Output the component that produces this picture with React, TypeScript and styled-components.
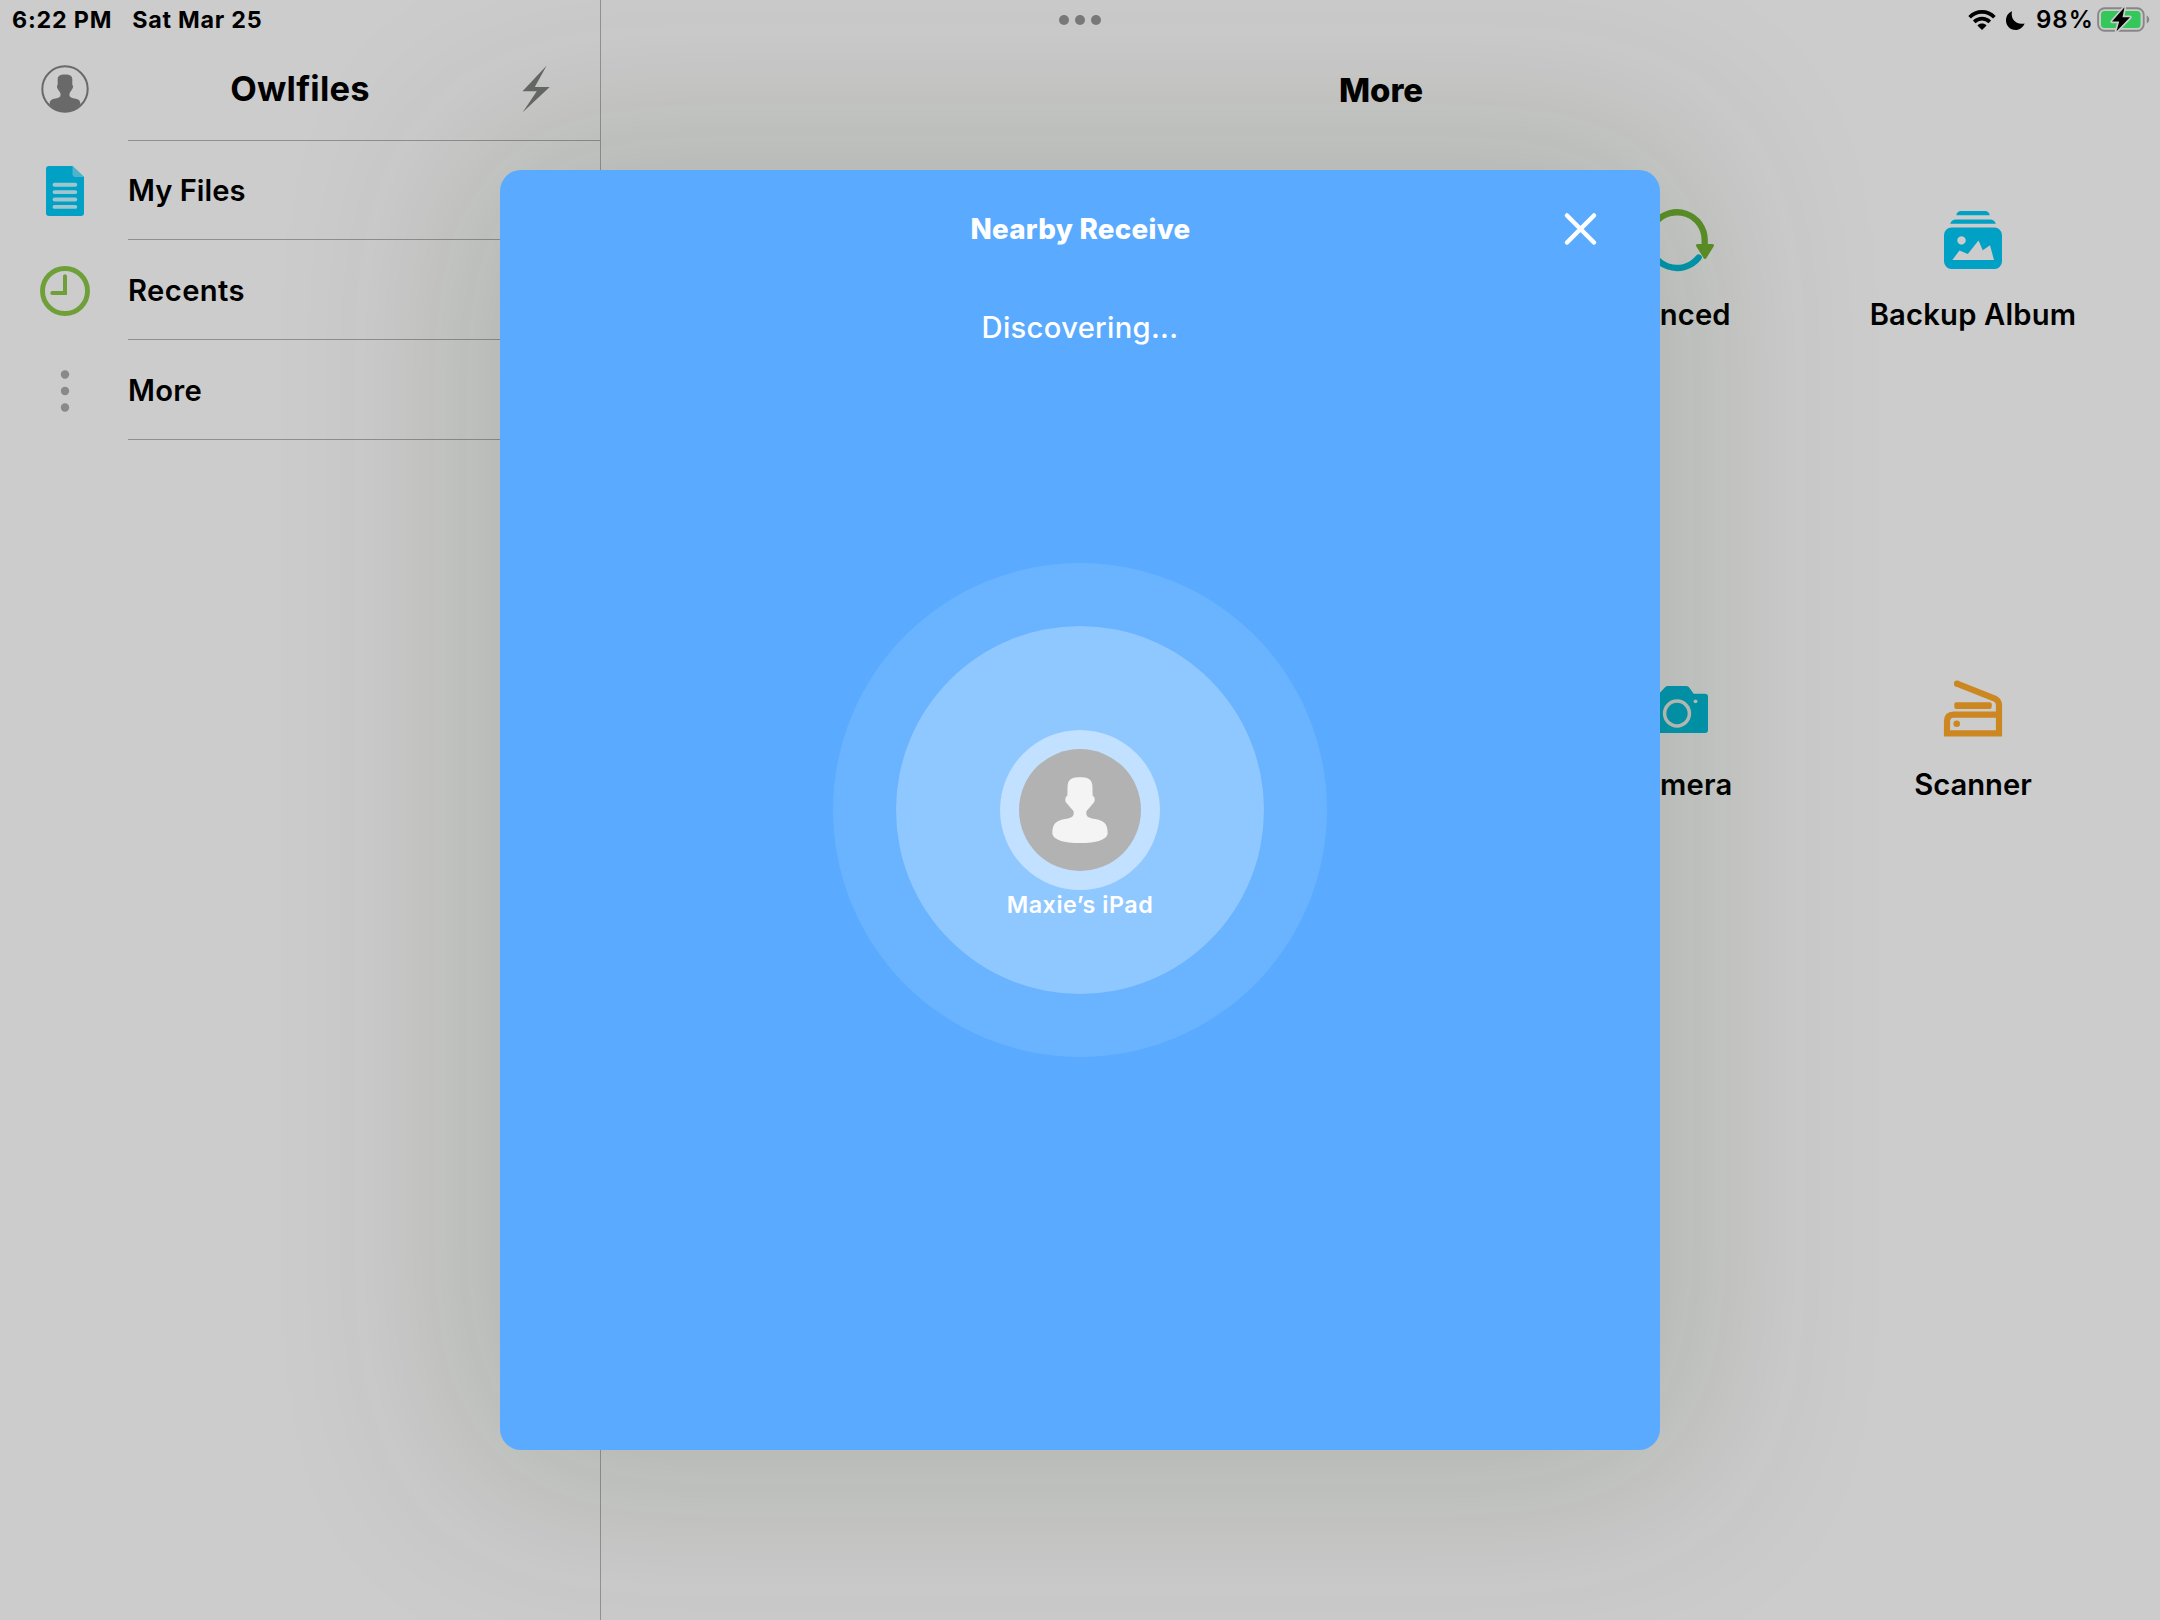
import React from "react";
import styled, { createGlobalStyle } from "styled-components";

const GlobalStyle = createGlobalStyle`
  *, *::before, *::after { box-sizing: border-box; }
  body {
    margin: 0;
    background: #cccccc;
    overflow: hidden;
  }
`;

const Screen = styled.div`
  display: grid;
  grid-template: 1620px / 2160px;
  width: 2160px;
  height: 1620px;
  overflow: hidden;
  background: #cccccc;
  color: #000;
  font-family: Inter, "Liberation Sans", sans-serif;
  white-space: nowrap;

  & > * {
    grid-area: 1 / 1;
  }
`;

const Icon = styled.svg`
  display: block;
  flex: none;
  overflow: visible;
`;

/* Status bar */

const StatusBar = styled.header`
  align-self: start;
  display: grid;
  grid-template-columns: 1fr auto 1fr;
  align-items: center;
  height: 40px;
  padding: 0 10px 0 12px;
  font-size: 23.3px;
  font-weight: 650;
  line-height: 40px;
`;

const StatusLeft = styled.div`
  display: flex;
  gap: 20px;
`;

const StatusText = styled.span<{ $tracking: number }>`
  letter-spacing: ${({ $tracking }) => $tracking}px;
`;

const StatusRight = styled.div`
  display: flex;
  justify-content: flex-end;
  align-items: center;
`;

const BatteryLevel = styled.span`
  margin: 0 3px 0 11px;
  font-size: 24px;
  font-weight: 600;
  letter-spacing: 1.1px;
`;

const MoonSlot = styled.span`
  display: flex;
  margin-left: 10px;
`;

const Multitask = styled.div`
  display: flex;
  gap: 6px;
  margin-right: 2px;
`;

const Dot = styled.i`
  width: 10px;
  height: 10px;
  border-radius: 50%;
  background: #7a7a79;
`;

/* Split view */

const SplitView = styled.div`
  display: grid;
  grid-template-columns: 601px 1fr;
`;

const Sidebar = styled.aside`
  border-right: 1px solid #929292;
`;

const SidebarHeader = styled.div`
  display: grid;
  grid-template-columns: 128px 344px 1fr;
  align-items: center;
  height: 140px;
  padding-top: 37px;
`;

const SidebarTitle = styled.h1`
  margin: 0;
  font-size: 34.5px;
  font-weight: 700;
  line-height: 40px;
  letter-spacing: 0.2px;
  text-align: center;
`;

const IconSlot = styled.span`
  display: flex;
  justify-content: center;
  align-items: center;
`;

const AccountSlot = styled(IconSlot)`
  padding-left: 1px;
`;

const HeaderAction = styled(IconSlot)`
  justify-content: flex-start;
  padding-left: 50px;
`;

const Rows = styled.nav`
  display: flex;
  flex-direction: column;
  margin-top: 1px;
`;

const IconCell = styled(IconSlot)`
  padding: 2px 0 0 2px;
`;

const RowLabel = styled.span<{ $tracking: number }>`
  display: flex;
  align-items: center;
  padding-top: 2px;
  border-bottom: 1px solid #8f8f8f;
  font-size: 29.2px;
  font-weight: 600;
  letter-spacing: ${({ $tracking }) => $tracking}px;
`;

const Row = styled.div`
  display: grid;
  grid-template-columns: 128px 1fr;
  height: 100px;

  &:first-child {
    height: 99px;
  }

  &:first-child > ${IconCell}, &:first-child > ${RowLabel} {
    padding-top: 1px;
  }
`;

const HeaderRule = styled.div`
  height: 1px;
  margin: 0 0 -1px 128px;
  background: #8f8f8f;
`;

const Main = styled.main`
  padding: 70px 39px 0 40px;
`;

const MainTitle = styled.h2`
  margin: 0;
  font-size: 33px;
  font-weight: 800;
  line-height: 40px;
  letter-spacing: -0.1px;
  text-align: center;
`;

const TileGrid = styled.div`
  display: grid;
  grid-template-columns: repeat(5, 296px);
  grid-auto-rows: 470px;
  margin-top: 94px;
`;

const Tile = styled.div<{ $column: number }>`
  grid-column: ${({ $column }) => $column};
  display: flex;
  flex-direction: column;
  align-items: center;
  gap: 18px;
`;

const TileLabel = styled.span<{ $tracking: number }>`
  font-size: 29.2px;
  font-weight: 600;
  line-height: 41px;
  letter-spacing: ${({ $tracking }) => $tracking}px;
`;

/* Nearby receive sheet */

const Sheet = styled.section`
  place-self: center;
  display: grid;
  grid-template-rows: 118px 80px 884px;
  align-content: start;
  width: 1160px;
  height: 1280px;
  border-radius: 21px;
  background: #5aaaff;
  box-shadow: 0 0 200px 32px rgba(22, 48, 14, 0.162);
  color: #fff;
`;

const SheetHeader = styled.div`
  display: grid;
  grid-template-columns: 160px 1fr 160px;
  align-items: center;
`;

const SheetTitle = styled.h3`
  grid-column: 2;
  margin: 0;
  padding-left: 1px;
  font-size: 27.8px;
  font-weight: 800;
  line-height: 40px;
  letter-spacing: 0.25px;
  text-align: center;
`;

const SheetStatus = styled.p`
  margin: 0;
  align-self: center;
  font-size: 29.2px;
  font-weight: 500;
  line-height: 40px;
  letter-spacing: 0.3px;
  text-align: center;
`;

const Radar = styled.div`
  display: grid;
  place-items: center;

  & > * {
    grid-area: 1 / 1;
  }
`;

const Ring = styled.div<{ $size: number; $color: string }>`
  flex: none;
  display: grid;
  place-items: center;
  width: ${({ $size }) => $size}px;
  height: ${({ $size }) => $size}px;
  border-radius: 50%;
  background: ${({ $color }) => $color};
`;

const Device = styled.div`
  display: flex;
  flex-direction: column;
  align-items: center;
  height: 160px;
`;

const DeviceName = styled.span`
  font-size: 23.3px;
  font-weight: 600;
  line-height: 30px;
  letter-spacing: 0.55px;
`;

/* Drawings */

const WifiIcon = () => (
  <Icon width="28" height="20" viewBox="0 0 28 20">
    <path
      d="M1.6 7.2C8.6.2 19.4.2 26.4 7.2M6.2 11.9c4.6-4.3 11-4.3 15.6 0"
      fill="none"
      stroke="#000"
      strokeWidth="3.7"
    />
    <path d="M14 20l-4.6-4.6c2.6-2.4 6.6-2.4 9.2 0z" />
  </Icon>
);

const MoonIcon = () => (
  <Icon width="19" height="19" viewBox="0 0 19 19">
    <path d="M6 .3C4.300 7.800 9.700 14.300 18.600 12.500 17 16.500 13.500 19 9.500 19 4.200 19 0 14.800 0 9.500 0 5.300 2.300 1.800 6 .3z" />
  </Icon>
);

const BatteryIcon = () => (
  <Icon width="53" height="26" viewBox="0 0 53 26">
    <rect x="1.100" y="1.200" width="45.600" height="22.600" rx="6.500" fill="none" stroke="#878787" strokeWidth="1.900" />
    <path d="M49.700 8.500c3.400 1.500 3.400 6.500 0 8z" fill="#878787" />
    <rect x="4" y="4" width="39.600" height="17" rx="3.500" fill="#34c759" />
    <path
      d="M27.500.3L15 14.500h7.200L19.500 24.300 33 10.300h-7.500z"
      stroke="#cccccc"
      strokeWidth="3.400"
      strokeLinejoin="round"
      paintOrder="stroke"
    />
  </Icon>
);

const AccountIcon = () => (
  <Icon width="48" height="48" viewBox="0 0 48 48">
    <circle cx="24" cy="24" r="22.700" fill="none" stroke="#696969" strokeWidth="2" />
    <path
      d="M16.700 14.500c0-3.500 1.800-5 7.300-5s7.300 1.500 7.300 5v5.300c1 .6 1 2.500 0 4.200L29.300 27c-1 1.300-1 3-.6 4.200 1.600 2.200 5.500 2 8.300 3.200 1.700.8 2.300 2.500 2.500 4.900C35.500 43.800 30.500 47 24 47S12.500 43.800 8.500 39.300c.2-2.400.8-4.100 2.500-4.900 2.800-1.200 6.700-1 8.300-3.200.4-1.200.4-2.900-.6-4.200l-2-3c-1-1.700-1-3.600 0-4.200z"
      fill="#696969"
    />
  </Icon>
);

const BoltIcon = () => (
  <Icon width="28" height="48" viewBox="0 0 28 48">
    <path d="M24.700.5L.5 26.200h14.300L.7 47.300 27.700 22H12.800z" fill="#686967" />
  </Icon>
);

const FileIcon = () => (
  <Icon width="38" height="50" viewBox="0 0 38 50">
    <path d="M3 0h23.500L38 11v36a3 3 0 0 1-3 3H3a3 3 0 0 1-3-3V3a3 3 0 0 1 3-3z" fill="#00a1c5" />
    <path d="M26.500 0L38 11h-8.500a3 3 0 0 1-3-3z" fill="#4fb3cb" />
    <path
      d="M8.500 18.700h20.800M8.500 26.100h20.800M8.500 33.500h20.800M8.500 40.900h20.800"
      stroke="#9fc6cf"
      strokeWidth="3.900"
      strokeLinecap="round"
    />
  </Icon>
);

const ClockIcon = () => (
  <Icon width="50" height="50" viewBox="0 0 50 50">
    <circle cx="25" cy="25" r="22.500" fill="none" stroke="#6f9f38" strokeWidth="4.900" />
    <path d="M23 10.300a2 2 0 0 1 4 0V29H12.300a2 2 0 0 1 0-4H23z" fill="#6f9f38" />
  </Icon>
);

const MoreIcon = () => (
  <Icon width="10" height="50" viewBox="0 0 10 50">
    <g fill="#898989">
      <circle cx="5" cy="8.500" r="4.200" />
      <circle cx="5" cy="25" r="4.200" />
      <circle cx="5" cy="41.500" r="4.200" />
    </g>
  </Icon>
);

const SyncIcon = () => (
  <Icon width="72" height="72" viewBox="0 0 72 72">
    <g fill="none" strokeWidth="6.300" strokeLinecap="round">
      <path d="M57.700 53.500A27.700 27.700 0 0 1 8.300 36v-5" stroke="#0098b1" />
      <path d="M14.500 18.500A27.700 27.700 0 0 1 63.700 36v5" stroke="#5d9128" />
    </g>
    <path d="M56.500 41.500h15L64 53.500z" fill="#5d9128" stroke="#5d9128" strokeWidth="3" strokeLinejoin="round" />
    <path d="M.5 30.500h15L8 18.500z" fill="#0098b1" stroke="#0098b1" strokeWidth="3" strokeLinejoin="round" />
  </Icon>
);

const AlbumIcon = () => (
  <Icon width="58" height="72" viewBox="0 0 58 72">
    <g fill="#00a1c5">
      <path d="M12.300 11.300c.6-2.800 2.200-4.200 4.700-4.200h24c2.500 0 4.100 1.400 4.700 4.200z" />
      <path d="M6.200 19.700c1-2.700 3-4.100 5.800-4.100h34c2.800 0 4.800 1.400 5.800 4.100z" />
      <path
        fillRule="evenodd"
        d="M7.500 23.600h43a7.500 7.500 0 0 1 7.500 7.500v26.400a7.500 7.500 0 0 1-7.500 7.500h-43A7.500 7.500 0 0 1 0 57.500V31.100a7.500 7.500 0 0 1 7.500-7.500zM8.300 56H50L46 41.300l-7.200 4.900-4.300-9.700L23.800 50l-8.300-3.600zM17.500 32.200a4.200 4.200 0 1 0 .01 0z"
      />
    </g>
  </Icon>
);

const CameraIcon = () => (
  <Icon width="62" height="72" viewBox="0 0 62 72">
    <path
      d="M3 19.700h10l6-6.500q1.300-1.200 3-1.200h18q1.700 0 3 1.200l4.700 6.500H59a3 3 0 0 1 3 3V56a3 3 0 0 1-3 3H3a3 3 0 0 1-3-3V22.700a3 3 0 0 1 3-3z"
      fill="#0098b2"
    />
    <circle cx="31" cy="39.500" r="12.400" fill="none" stroke="#c1c3be" strokeWidth="3.500" />
    <circle cx="49.500" cy="27.300" r="1.900" fill="#c1c3be" />
  </Icon>
);

const ScannerIcon = () => (
  <Icon width="58" height="72" viewBox="0 0 58 72">
    <path
      d="M13 9.700L50.800 24.500Q55 26.500 55 31V59.300H3V47.500Q3 40.600 9.500 40.600H55"
      fill="none"
      stroke="#cc8720"
      strokeWidth="6.200"
    />
    <circle cx="13" cy="9.700" r="3.100" fill="#cc8720" />
    <rect x="10.300" y="28.200" width="37.400" height="6.700" rx="2" fill="#cc8720" />
    <circle cx="12.700" cy="49.700" r="3.300" fill="#cc8720" />
  </Icon>
);

const PersonIcon = () => (
  <Icon width="56" height="66" viewBox="0 0 168 198">
    <path
      d="M84 1C102 1 118 3 121 24C122 35 121 45 122 56C129 59 130 71 125 77C118 85 112 93 104 101C101 109 103 117 110 121C122 127 137 126 149 132C163 139 167 151 167 170C165 188 132 198 84 198S3 188 1 170C1 151 5 139 19 132C31 126 46 127 58 121C65 117 67 109 64 101C56 93 50 85 43 77C38 71 39 59 46 56C47 45 46 35 47 24C50 3 66 1 84 1Z"
      fill="#f4f4f4"
    />
  </Icon>
);

const CloseIcon = () => (
  <Icon width="31" height="42" viewBox="0 0 31 42">
    <path d="M2 7.500L29 34.500M29 7.500L2 34.500" stroke="#fff" strokeWidth="4.500" strokeLinecap="round" />
  </Icon>
);

const places = [
  { label: "My Files", tracking: 0, Glyph: FileIcon },
  { label: "Recents", tracking: 0.4, Glyph: ClockIcon },
  { label: "More", tracking: 0.3, Glyph: MoreIcon },
];

const tools = [
  { label: "Synced", column: 4, tracking: 0.15, Glyph: SyncIcon },
  { label: "Backup Album", column: 5, tracking: 0.2, Glyph: AlbumIcon },
  { label: "Camera", column: 4, tracking: 0.2, Glyph: CameraIcon },
  { label: "Scanner", column: 5, tracking: 0, Glyph: ScannerIcon },
];

export default function App() {
  return (
    <>
      <GlobalStyle />
      <Screen>
        <SplitView>
          <Sidebar>
            <SidebarHeader>
              <AccountSlot>
                <AccountIcon />
              </AccountSlot>
              <SidebarTitle>Owlfiles</SidebarTitle>
              <HeaderAction>
                <BoltIcon />
              </HeaderAction>
            </SidebarHeader>
            <HeaderRule />
            <Rows>
              {places.map(({ label, tracking, Glyph }) => (
                <Row key={label}>
                  <IconCell>
                    <Glyph />
                  </IconCell>
                  <RowLabel $tracking={tracking}>{label}</RowLabel>
                </Row>
              ))}
            </Rows>
          </Sidebar>
          <Main>
            <MainTitle>More</MainTitle>
            <TileGrid>
              {tools.map(({ label, column, tracking, Glyph }) => (
                <Tile key={label} $column={column}>
                  <Glyph />
                  <TileLabel $tracking={tracking}>{label}</TileLabel>
                </Tile>
              ))}
            </TileGrid>
          </Main>
        </SplitView>

        <StatusBar>
          <StatusLeft>
            <StatusText $tracking={0.8}>6:22 PM</StatusText>
            <StatusText $tracking={0.75}>Sat Mar 25</StatusText>
          </StatusLeft>
          <Multitask>
            <Dot />
            <Dot />
            <Dot />
          </Multitask>
          <StatusRight>
            <WifiIcon />
            <MoonSlot>
              <MoonIcon />
            </MoonSlot>
            <BatteryLevel>98%</BatteryLevel>
            <BatteryIcon />
          </StatusRight>
        </StatusBar>

        <Sheet>
          <SheetHeader>
            <SheetTitle>Nearby Receive</SheetTitle>
            <IconSlot>
              <CloseIcon />
            </IconSlot>
          </SheetHeader>
          <SheetStatus>Discovering...</SheetStatus>
          <Radar>
            <Ring $size={494} $color="#6ab3ff" />
            <Ring $size={368} $color="#8fc7ff" />
            <Device>
              <Ring $size={160} $color="#c2e0ff">
                <Ring $size={122} $color="#b2b2b2">
                  <PersonIcon />
                </Ring>
              </Ring>
              <DeviceName>Maxie’s iPad</DeviceName>
            </Device>
          </Radar>
        </Sheet>
      </Screen>
    </>
  );
}
